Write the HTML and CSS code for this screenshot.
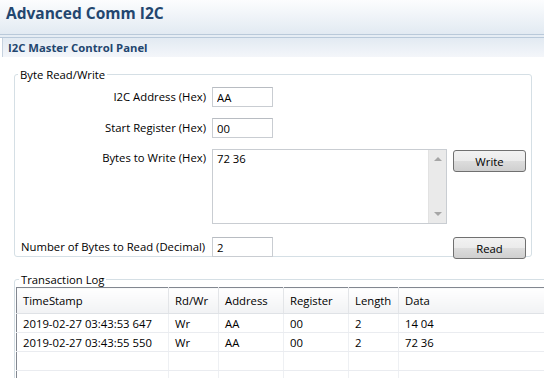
FILE: index.html
```html
<!DOCTYPE html>
<html lang="en">
<head>
    <title>Advanced Comm I2C</title>
    <link rel="stylesheet" href="styles.css">
</head>
<body>

<header class="titlebar">
    <h1>Advanced Comm I2C</h1>
</header>
<div class="rule"></div>

<section class="panel">
    <div class="panel-head">I2C Master Control Panel</div>

    <div class="panel-body">
        <!-- Byte read / write controls -->
        <fieldset class="group rw">
            <legend>Byte Read/Write</legend>
            <div class="form">
                <label class="lbl">I2C Address (Hex)</label>
                <input class="field short" type="text" value="AA">
                <span></span>

                <label class="lbl">Start Register (Hex)</label>
                <input class="field short" type="text" value="00">
                <span></span>

                <label class="lbl top">Bytes to Write (Hex)</label>
                <div class="textbox">
                    <div class="textbox-text">72 36</div>
                    <div class="scrollbar">
                        <span class="arrow up"></span>
                        <span class="arrow down"></span>
                    </div>
                </div>
                <button class="btn write">Write</button>

                <label class="lbl left">Number of Bytes to Read (Decimal)</label>
                <input class="field short" type="text" value="2">
                <button class="btn">Read</button>
            </div>
        </fieldset>

        <!-- Transaction log -->
        <fieldset class="group log">
            <legend>Transaction Log</legend>
            <table class="grid">
                <thead>
                    <tr>
                        <th class="c-time">TimeStamp</th>
                        <th class="c-rw">Rd/Wr</th>
                        <th class="c-addr">Address</th>
                        <th class="c-reg">Register</th>
                        <th class="c-len">Length</th>
                        <th>Data</th>
                    </tr>
                </thead>
                <tbody>
                    <tr>
                        <td>2019-02-27 03:43:53 647</td>
                        <td>Wr</td>
                        <td>AA</td>
                        <td>00</td>
                        <td>2</td>
                        <td>14 04</td>
                    </tr>
                    <tr>
                        <td>2019-02-27 03:43:55 550</td>
                        <td>Wr</td>
                        <td>AA</td>
                        <td>00</td>
                        <td>2</td>
                        <td>72 36</td>
                    </tr>
                    <tr><td></td><td></td><td></td><td></td><td></td><td></td></tr>
                    <tr><td></td><td></td><td></td><td></td><td></td><td></td></tr>
                </tbody>
            </table>
        </fieldset>
    </div>
</section>

</body>
</html>
```

FILE: styles.css
```css
body {
    margin: 0;
    width: 544px;
    height: 378px;
    overflow: hidden;
    background-color: #ffffff;
    font-family: "Open Sans", "Noto Sans", sans-serif;
    font-size: 11.3px;
    color: #000;
}
.titlebar {
    height: 34px;
    padding-left: 6px;
    background: linear-gradient(#fcfdfe, #e2eaf2);
}
.titlebar h1 {
    margin: 0;
    font-size: 15.5px;
    line-height: 26px;
    font-weight: bold;
    color: #23466f;
}
.rule {
    height: 2px;
    border-top: 1px solid #b9c9da;
    border-bottom: 1px solid #b9c9da;
    background-color: #e6edf4;
}
.panel-head {
    height: 19px;
    margin-left: 2px;
    padding-left: 5px;
    border-left: 1px solid #c6d2df;
    background: linear-gradient(#e2eaf2, #f4f6fa);
    font-weight: bold;
    line-height: 20px;
    color: #23466f;
}
.panel-body {
    padding: 10px 0 0 14px;
    height: 320px;
    overflow: hidden;
}
.group {
    margin: 0;
    padding: 0;
    border: 1px solid #d5dfe5;
    border-radius: 3px;
}
.group legend {
    margin-left: 3px;
    padding: 0 2px;
    line-height: 15px;
}
.rw {
    width: 518px;
    height: 190px;
    box-sizing: border-box;
}
.form {
    display: grid;
    grid-template-columns: 191px 235px 73px;
    column-gap: 6px;
    padding: 5px 0 0 0;
}
.lbl {
    text-align: right;
    line-height: 20px;
}
.lbl.top {
    align-self: start;
    line-height: 18px;
}
.lbl.left {
    text-align: left;
    padding-left: 6px;
}
.field {
    height: 20px;
    box-sizing: border-box;
    padding: 0 4px;
    border: 1px solid #c9cdd2;
    border-top-color: #b8bcc2;
    font: inherit;
}
.short {
    width: 61px;
}
.form > :nth-child(n+4) {
    margin-top: 11px;
}
.form > :nth-child(n+10) {
    margin-top: 13px;
}
.textbox {
    display: flex;
    height: 75px;
    box-sizing: border-box;
    border: 1px solid #c9cdd2;
}
.textbox-text {
    flex: 1;
    padding: 1px 4px;
}
.scrollbar {
    width: 17px;
    display: flex;
    flex-direction: column;
    justify-content: space-between;
    align-items: center;
    padding: 7px 0;
    background-color: #eaeaea;
    border-left: 1px solid #e2e2e2;
}
.arrow {
    width: 0;
    height: 0;
    border-left: 4px solid transparent;
    border-right: 4px solid transparent;
}
.arrow.up {
    border-bottom: 4px solid #a6a6a6;
}
.arrow.down {
    border-top: 4px solid #a6a6a6;
}
.btn {
    height: 22px;
    padding: 0;
    border: 1px solid #707070;
    border-radius: 3px;
    background: linear-gradient(#f2f2f2 0%, #ebebeb 50%, #dddddd 50%, #cfcfcf 100%);
    font: inherit;
    color: #000;
}
.btn.write {
    align-self: start;
    margin-top: 12px;
}
.log {
    width: 560px;
    margin-top: 15px;
    padding: 0 0 0 1px;
}
.grid {
    border-collapse: collapse;
    width: 100%;
    border-top: 1px solid #828790;
    border-left: 1px solid #828790;
}
.grid th {
    height: 25px;
    padding: 0 0 0 6px;
    text-align: left;
    font-weight: normal;
    background: linear-gradient(#ffffff, #f1f2f4);
    border-right: 1px solid #e3e5e8;
    border-bottom: 1px solid #dfe2e6;
}
.grid td {
    height: 18px;
    padding: 0 0 0 6px;
    border-right: 1px solid #eef0f3;
    border-bottom: 1px solid #eaecf0;
}
.c-time { width: 145px; }
.c-rw { width: 43px; }
.c-addr { width: 58px; }
.c-reg { width: 58px; }
.c-len { width: 43px; }
```
